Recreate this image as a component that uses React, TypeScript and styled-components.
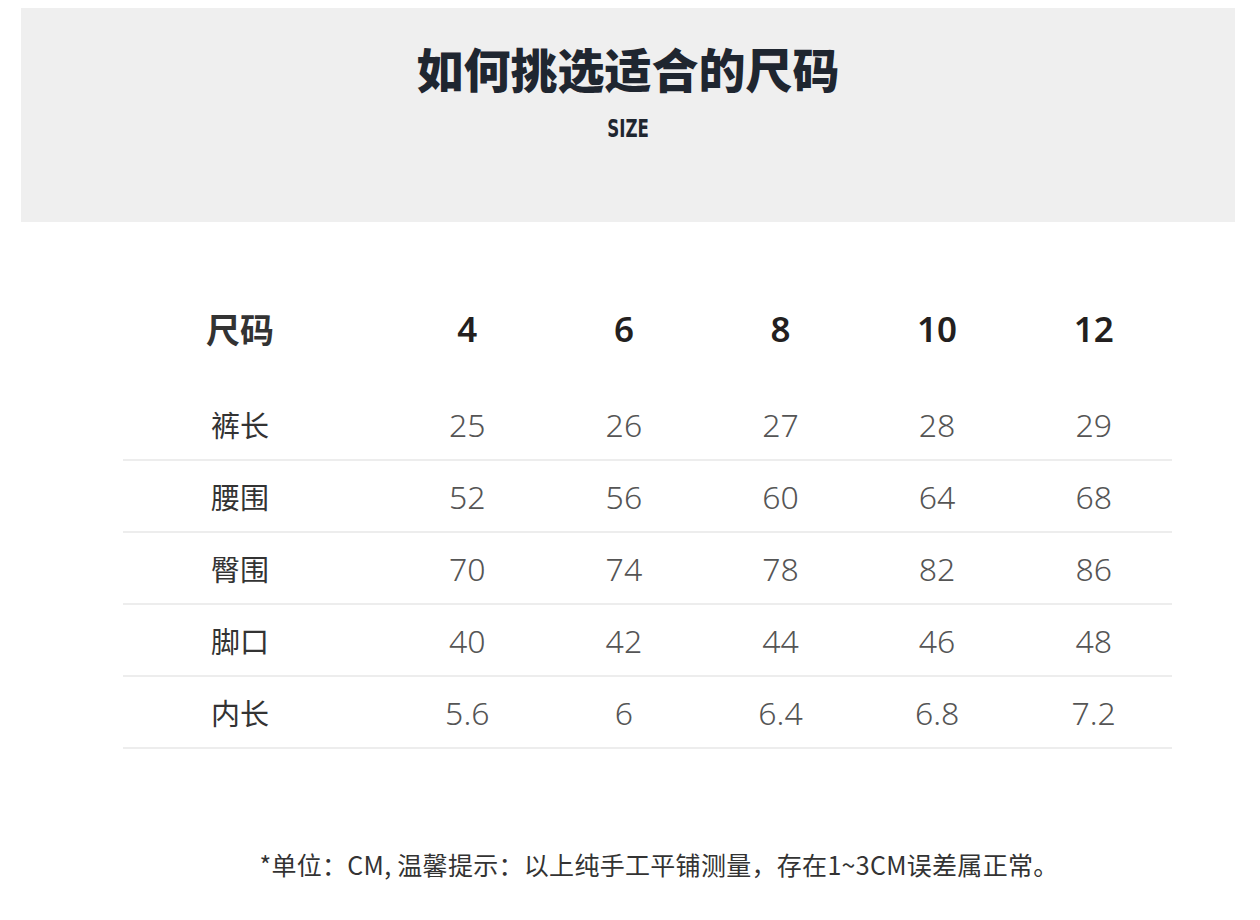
import React from "react";
import styled, { createGlobalStyle } from "styled-components";

const Global = createGlobalStyle`
  html, body { margin: 0; padding: 0; background: #ffffff; }
  body { font-family: "Noto Sans CJK SC", "Noto Sans", sans-serif; }
`;

const Page = styled.div`
  width: 1260px;
  height: 920px;
  padding-top: 8px;
  box-sizing: border-box;
  display: flex;
  flex-direction: column;
  align-items: stretch;
`;

const Banner = styled.header`
  margin: 0 25px 0 21px;
  height: 214px;
  background: #efefef;
  display: flex;
  flex-direction: column;
  align-items: center;
`;

const Title = styled.h1`
  margin: 32px 0 0;
  font-family: "Noto Sans CJK SC", sans-serif;
  font-weight: 900;
  font-size: 47px;
  line-height: 56px;
  color: #1f2630;
`;

const Sub = styled.div`
  margin-top: 19px;
  font-family: "Liberation Sans Narrow", "DejaVu Sans Condensed", sans-serif;
  font-weight: 700;
  font-size: 25px;
  line-height: 28px;
  color: #1f2630;
  transform: scaleX(0.74);
`;

const Table = styled.div`
  margin: 66px 88px 0 123px;
  display: flex;
  flex-direction: column;
`;

const Row = styled.div<{ $head?: boolean }>`
  display: grid;
  grid-template-columns: 266px repeat(5, 1fr);
  align-items: center;
  height: ${(p) => (p.$head ? "80px" : "70px")};
  margin-bottom: ${(p) => (p.$head ? "21px" : "0")};
  border-bottom: ${(p) => (p.$head ? "none" : "2px solid #ededed")};
`;

const Label = styled.div<{ $head?: boolean }>`
  padding-right: 32px;
  text-align: center;
  font-family: "Noto Sans CJK SC", sans-serif;
  font-size: ${(p) => (p.$head ? "34px" : "29px")};
  font-weight: ${(p) => (p.$head ? 700 : 400)};
  color: #333333;
`;

const Cell = styled.div<{ $head?: boolean }>`
  text-align: center;
  font-family: "Noto Sans", "Noto Sans CJK SC", sans-serif;
  font-size: ${(p) => (p.$head ? "35px" : "32px")};
  font-weight: ${(p) => (p.$head ? 600 : 300)};
  color: ${(p) => (p.$head ? "#231f20" : "#555555")};
`;

const Note = styled.p`
  margin: 97px 0 0;
  text-align: center;
  font-family: "Noto Sans CJK SC", sans-serif;
  font-size: 25px;
  letter-spacing: 0.3px;
  color: #333333;
  padding-left: 58px;
`;

const sizes = ["4", "6", "8", "10", "12"];
const rows: [string, string[]][] = [
  ["裤长", ["25", "26", "27", "28", "29"]],
  ["腰围", ["52", "56", "60", "64", "68"]],
  ["臀围", ["70", "74", "78", "82", "86"]],
  ["脚口", ["40", "42", "44", "46", "48"]],
  ["内长", ["5.6", "6", "6.4", "6.8", "7.2"]],
];

export default function App() {
  return (
    <Page>
      <Global />
      <Banner>
        <Title>如何挑选适合的尺码</Title>
        <Sub>SIZE</Sub>
      </Banner>
      <Table>
        <Row $head>
          <Label $head>尺码</Label>
          {sizes.map((s) => (
            <Cell $head key={s}>{s}</Cell>
          ))}
        </Row>
        {rows.map(([name, vals]) => (
          <Row key={name}>
            <Label>{name}</Label>
            {vals.map((v, i) => (
              <Cell key={i}>{v}</Cell>
            ))}
          </Row>
        ))}
      </Table>
      <Note>*单位：CM, 温馨提示：以上纯手工平铺测量，存在1~3CM误差属正常。</Note>
    </Page>
  );
}
